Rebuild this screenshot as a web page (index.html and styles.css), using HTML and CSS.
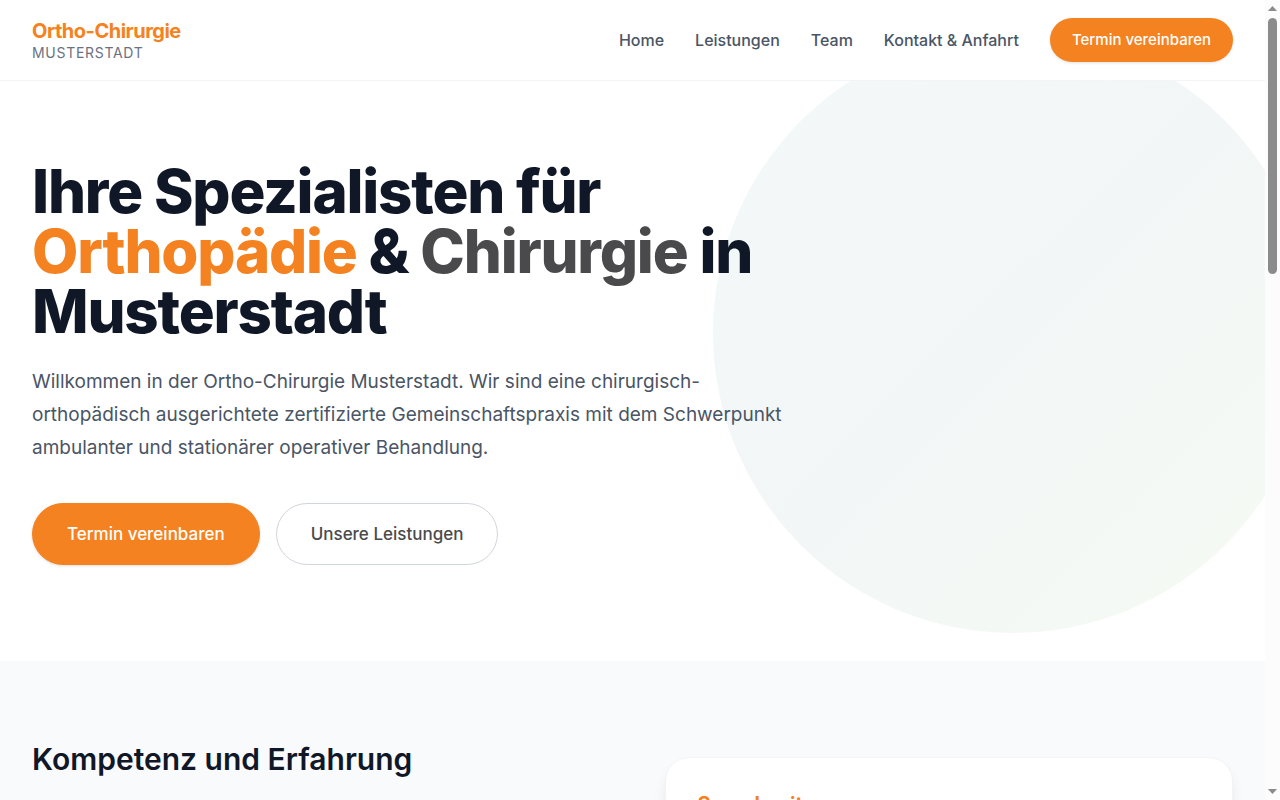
FILE: index.html
```html
<!DOCTYPE html>
<html lang="de">
<head>
<meta charset="utf-8">
<meta name="viewport" content="width=device-width, initial-scale=1">
<title>Ortho-Chirurgie Musterstadt</title>
<link rel="stylesheet" href="styles.css">
</head>
<body>
<div class="window">
  <div class="page">
    <header class="header">
      <a class="brand" href="#">
        <span class="brand-name">Ortho-Chirurgie</span>
        <span class="brand-city">Musterstadt</span>
      </a>
      <nav class="nav">
        <a class="nav-link" href="#">Home</a>
        <a class="nav-link" href="#">Leistungen</a>
        <a class="nav-link" href="#">Team</a>
        <a class="nav-link" href="#">Kontakt &amp; Anfahrt</a>
        <a class="nav-cta" href="#">Termin vereinbaren</a>
      </nav>
    </header>
    <main>
      <section class="hero">
        <div class="hero-circle"></div>
        <div class="hero-content">
          <h1 class="hero-title">Ihre Spezialisten für <span class="accent">Orthopädie</span> &amp; <span class="muted">Chirurgie</span> in Musterstadt</h1>
          <p class="hero-text">Willkommen in der Ortho-Chirurgie Musterstadt. Wir sind eine chirurgisch-orthopädisch ausgerichtete zertifizierte Gemeinschaftspraxis mit dem Schwerpunkt ambulanter und stationärer operativer Behandlung.</p>
          <div class="hero-actions">
            <a class="button button-primary" href="#">Termin vereinbaren</a>
            <a class="button button-outline" href="#">Unsere Leistungen</a>
          </div>
        </div>
      </section>
      <section class="about">
        <h2 class="about-title">Kompetenz und Erfahrung</h2>
        <div class="card">
          <h3 class="card-title">Sprechzeiten</h3>
        </div>
      </section>
    </main>
  </div>
  <div class="scrollbar" aria-hidden="true">
    <svg class="arrow" viewBox="0 0 9 5"><path d="M0 5 4.500 0 9 5z"/></svg>
    <div class="track"><div class="thumb"></div></div>
    <svg class="arrow" viewBox="0 0 9 5"><path d="M0 0h9L4.500 5z"/></svg>
  </div>
</div>
</body>
</html>
```
FILE: styles.css
```css
* { box-sizing: border-box; }

body {
  margin: 0;
  font-family: Inter, "Liberation Sans", sans-serif;
  color: #101828;
  background: #fff;
}

a { text-decoration: none; color: inherit; }
h1, h2, h3, p { margin: 0; }

.window { display: flex; height: 100vh; overflow: hidden; }
.page { flex: 1; min-width: 0; overflow: hidden; }

.header {
  display: flex;
  align-items: center;
  justify-content: space-between;
  padding: 18px 32px;
  border-bottom: 1px solid #f3f4f6;
  background: #fff;
}

.brand { display: flex; flex-direction: column; }
.brand-name { font-size: 20px; line-height: 26px; font-weight: 700; letter-spacing: -0.025em; color: #f58220; }
.brand-city { font-size: 14px; line-height: 18px; letter-spacing: 0.05em; text-transform: uppercase; color: #6a7282; }

.nav { display: flex; align-items: center; gap: 31px; font-size: 16px; line-height: 24px; font-weight: 500; color: #4a5565; }
.nav-cta {
  padding: 10px 22px;
  border-radius: 24px;
  background: #f58220;
  color: #fff;
  font-size: 15px;
  box-shadow: 0 1px 3px rgba(0, 0, 0, 0.12);
}

.hero { position: relative; overflow: hidden; padding: 80px 32px 96px; }
.hero-circle {
  position: absolute;
  top: -48px;
  right: -48px;
  width: 600px;
  height: 600px;
  border-radius: 50%;
  background: linear-gradient(to bottom right, #f3f8fa, #f2f6f6 50%, #f7fbf4);
}
.hero-content { position: relative; max-width: 768px; }
.hero-title { font-size: 60px; line-height: 60px; font-weight: 800; letter-spacing: -0.02em; }
.accent { color: #f58220; }
.muted { color: #4a4a4c; }
.hero-text { margin-top: 24px; font-size: 19px; line-height: 33px; color: #4a5565; }
.hero-actions { display: flex; gap: 16px; margin-top: 39px; }
.button { padding: 16px 34px; border: 1px solid transparent; border-radius: 32px; font-size: 17px; line-height: 28px; font-weight: 500; }
.button-primary { background: #f58220; border-color: #f58220; color: #fff; box-shadow: 0 1px 3px rgba(0, 0, 0, 0.12); }
.button-outline { background: #fff; border-color: #d1d5dc; color: #4a4a4c; }

.about {
  display: grid;
  grid-template-columns: 1fr 1fr;
  gap: 64px;
  padding: 80px 32px;
  background: #f9fafc;
}
.about-title { font-size: 30px; line-height: 36px; font-weight: 600; }
.card {
  margin-top: 16px;
  min-height: 320px;
  padding: 32px;
  border: 1px solid #f3f4f6;
  border-radius: 24px;
  background: #fff;
  box-shadow: 0 10px 15px -3px rgba(0, 0, 0, 0.1);
}
.card-title { font-size: 20px; line-height: 28px; font-weight: 700; color: #f58220; }

.scrollbar { display: flex; flex-direction: column; align-items: center; width: 15px; padding: 6px 0; background: #fcfcfc; }
.arrow { display: block; width: 9px; height: 5px; fill: #8b8b8b; }
.track { flex: 1; padding: 7px 0; }
.thumb { width: 9px; height: 256px; border-radius: 5px; background: #8b8b8b; }
```
